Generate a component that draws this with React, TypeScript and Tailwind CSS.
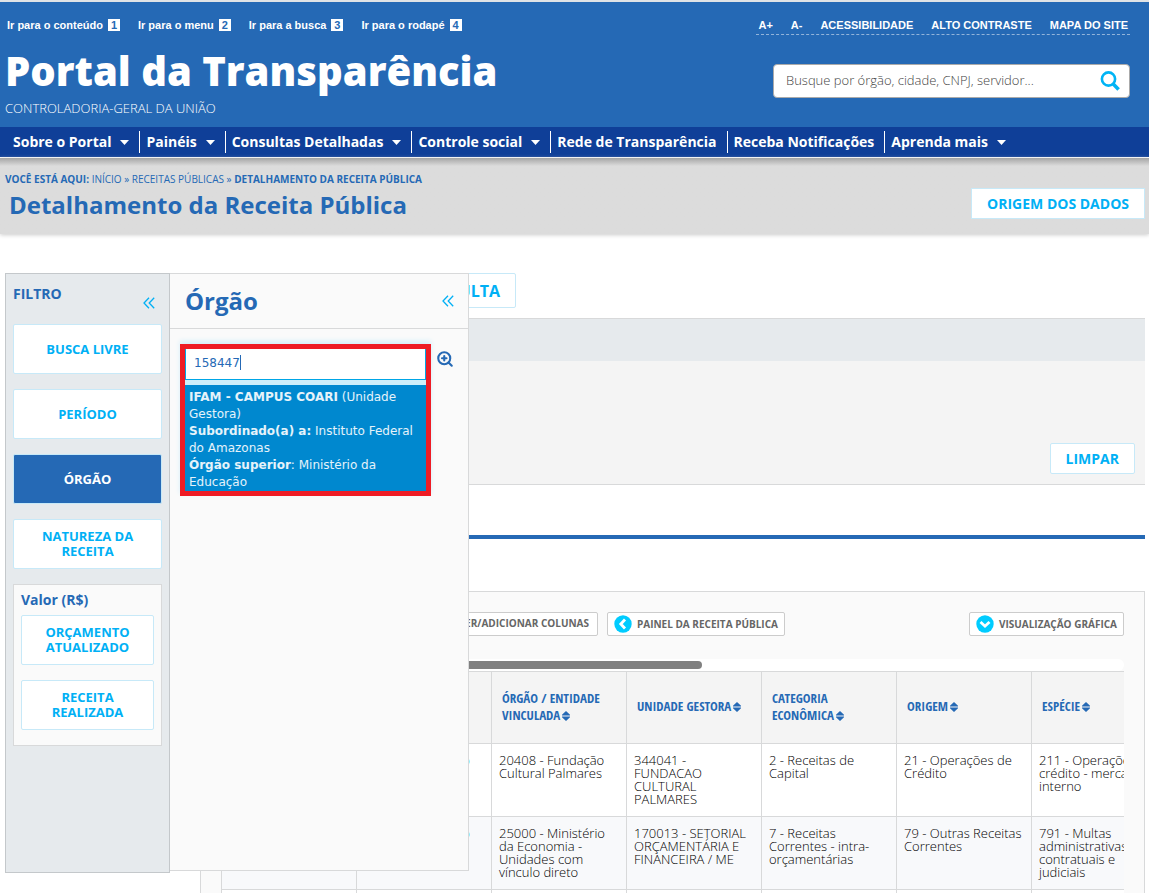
import React from 'react';
import { ZoomIn } from 'lucide-react';

const atalhos = [
  { label: 'Ir para o conteúdo', numero: 1 },
  { label: 'Ir para o menu', numero: 2 },
  { label: 'Ir para a busca', numero: 3 },
  { label: 'Ir para o rodapé', numero: 4 },
];

const acessibilidade = ['A+', 'A-', 'ACESSIBILIDADE', 'ALTO CONTRASTE', 'MAPA DO SITE'];

const menu = [
  { label: 'Sobre o Portal', submenu: true },
  { label: 'Painéis', submenu: true },
  { label: 'Consultas Detalhadas', submenu: true },
  { label: 'Controle social', submenu: true },
  { label: 'Rede de Transparência', submenu: false },
  { label: 'Receba Notificações', submenu: false },
  { label: 'Aprenda mais', submenu: true },
];

const filtros = [
  { label: 'BUSCA LIVRE', ativo: false },
  { label: 'PERÍODO', ativo: false },
  { label: 'ÓRGÃO', ativo: true },
  { label: 'NATUREZA DA RECEITA', ativo: false },
];

const valores = ['ORÇAMENTO ATUALIZADO', 'RECEITA REALIZADA'];

const colunas = [
  'DETALHAR',
  'ÓRGÃO SUPERIOR',
  'ÓRGÃO / ENTIDADE VINCULADA',
  'UNIDADE GESTORA',
  'CATEGORIA ECONÔMICA',
  'ORIGEM',
  'ESPÉCIE',
];

const linhas = [
  [
    '54000 - Ministério do Turismo',
    '20408 - Fundação Cultural Palmares',
    '344041 - FUNDACAO CULTURAL PALMARES',
    '2 - Receitas de Capital',
    '21 - Operações de Crédito',
    '211 - Operações de crédito - mercado interno',
  ],
  [
    '25000 - Ministério da Economia',
    '25000 - Ministério da Economia - Unidades com vínculo direto',
    '170013 - SETORIAL ORÇAMENTÁRIA E FINANCEIRA / ME',
    '7 - Receitas Correntes - intra-orçamentárias',
    '79 - Outras Receitas Correntes',
    '791 - Multas administrativas, contratuais e judiciais',
  ],
];

const Caret = () => (
  <svg className="ml-[9px] h-[5px] w-[9px]" viewBox="0 0 9 5" fill="currentColor" aria-hidden="true">
    <path d="M0 0h9L4.5 5z" />
  </svg>
);

const ChevronDuplo = () => (
  <svg className="h-3 w-3" viewBox="0 0 12 12" fill="none" stroke="currentColor" strokeWidth="1.3" aria-hidden="true">
    <path d="M6 .8 1 6l5 5.2M11.2.8l-5 5.2 5 5.2" />
  </svg>
);

const Ordenar = () => (
  <svg className="ml-0.5 inline-block h-2.5 w-2 align-middle" viewBox="0 0 8 10" fill="currentColor" aria-hidden="true">
    <path d="M4 0 8 3.8v.6H0v-.6zM0 5.6h8v.6L4 10 0 6.2z" />
  </svg>
);

const Circulo = ({ seta }: { seta: string }) => (
  <svg className="h-[18px] w-[18px]" viewBox="0 0 18 18" aria-hidden="true">
    <circle cx="9" cy="9" r="8.7" fill="#00ccff" />
    <path d={seta} fill="none" stroke="#fff" strokeWidth="2.8" />
  </svg>
);

const Cabecalho = () => (
  <header className="border-t-2 border-[#dfe3e6] bg-[#2569b5] text-white">
    <div className="flex justify-between pr-[19px] pl-[5px]">
      <div>
        <ul className="mt-[15px] flex gap-[18px] pl-0.5 font-['Liberation_Sans',sans-serif] text-[11px] leading-4 font-bold">
          {atalhos.map((item) => (
            <li key={item.numero}>
              <a href="#" className="flex items-center gap-[5px]">
                {item.label}
                <span className="h-3 w-3 bg-white text-center leading-3 text-[#2569b5]">{item.numero}</span>
              </a>
            </li>
          ))}
        </ul>
        <h1 className="mt-[9px] text-[40px] leading-[58px] font-extrabold">Portal da Transparência</h1>
        <p className="text-[13px] leading-4 font-light">CONTROLADORIA-GERAL DA UNIÃO</p>
      </div>
      <div className="flex flex-col items-end">
        <ul className="mt-[15px] flex gap-[18px] border-b border-dashed border-[#92b4da] px-0.5 pb-px font-['Liberation_Sans',sans-serif] text-[11px] leading-4 font-bold">
          {acessibilidade.map((item) => (
            <li key={item}>
              <a href="#">{item}</a>
            </li>
          ))}
        </ul>
        <form className="mt-[29px] flex h-[34px] w-[357px] items-center rounded-sm border border-[#aaa] bg-white pr-[9px] pl-3">
          <input
            type="search"
            aria-label="Busca no portal"
            placeholder="Busque por órgão, cidade, CNPJ, servidor..."
            className="min-w-0 flex-1 text-[13px] font-light text-[#444] outline-none placeholder:text-[#444]"
          />
          <button type="button" aria-label="Buscar" className="text-[#00b4f5]">
            <svg className="h-5 w-5" viewBox="0 0 20 20" fill="none" stroke="currentColor">
              <circle cx="8.5" cy="8" r="6.6" strokeWidth="2.6" />
              <path d="m13 12.8 5.6 5.6" strokeWidth="3.6" />
            </svg>
          </button>
        </form>
      </div>
    </div>
    <nav className="mt-[11px] border-b border-white bg-[#0f3f98] pl-[7px]">
      <ul className="flex h-[30px] items-center text-sm font-bold">
        {menu.map((item) => (
          <li key={item.label} className="border-r border-white pr-2.5 pl-1.5 last:border-r-0">
            <a href="#" className="flex h-[22px] items-center">
              {item.label}
              {item.submenu && <Caret />}
            </a>
          </li>
        ))}
      </ul>
    </nav>
  </header>
);

const Titulo = () => (
  <div className="flex h-[76px] justify-between bg-[#dcdcdc] bg-linear-to-b from-[#a5a5a5] to-[#dcdcdc] to-[8px] pr-1 pl-[5px] text-[#2569b5] shadow-[0_1px_4px_#ccc]">
    <div>
      <p className="mt-[13px] text-[10px] leading-4">
        <strong>VOCÊ ESTÁ AQUI:</strong> <a href="#">INÍCIO</a> » <a href="#">RECEITAS PÚBLICAS</a> »{' '}
        <strong>DETALHAMENTO DA RECEITA PÚBLICA</strong>
      </p>
      <h2 className="pl-1 text-2xl leading-9 font-bold">Detalhamento da Receita Pública</h2>
    </div>
    <button type="button" className="mt-[30px] h-[31px] border border-[#c7e9f8] bg-white px-[15px] text-sm font-bold text-[#00b0f5]">
      ORIGEM DOS DADOS
    </button>
  </div>
);

const PainelOrgao = () => (
  <section className="absolute top-[-1px] left-full z-10 ml-px h-[598px] w-[299px] border-r border-b border-[#d8d9da] bg-[#fafafa]">
    <div className="flex h-14 items-center justify-between border-y border-[#d8d9da] pr-3.5 pl-[15px]">
      <h3 className="text-2xl font-bold text-[#2569b5]">Órgão</h3>
      <button type="button" aria-label="Fechar painel" className="text-[#00b0f5]">
        <ChevronDuplo />
      </button>
    </div>
    <div className="flex items-start gap-[5px] pt-[15px] pl-2.5">
      <div className="w-[251px] border-[5px] border-[#ee1c25] bg-[#cdeefa] font-['DejaVu_Sans',sans-serif] shadow-[0_-3px_5px_#d6effa]">
        <div className="relative">
          <input
            type="text"
            aria-label="Órgão"
            defaultValue="158447"
            className="h-[31px] w-full border-x border-b border-[#00a6e6] bg-white px-2 pb-0.5 text-xs text-[#2569b5] outline-none"
          />
          <span className="absolute top-1.5 left-[55px] h-[15px] w-px bg-[#2569b5]" />
        </div>
        <ul className="mt-[5px] bg-[#0088cf] text-xs leading-[17px] text-white/90">
          <li className="px-1 pt-1">
            <strong>IFAM - CAMPUS COARI</strong> (Unidade Gestora)
            <br />
            <strong>Subordinado(a) a:</strong> Instituto Federal do Amazonas
            <br />
            <strong>Órgão superior</strong>: Ministério da Educação
          </li>
        </ul>
      </div>
      <button type="button" aria-label="Pesquisar órgão" className="mt-1.5 text-[#2569b5]">
        <ZoomIn size={18} strokeWidth={2.8} />
      </button>
    </div>
  </section>
);

const Filtro = () => (
  <aside className="relative h-[600px] w-[165px] shrink-0 border border-[#c4c8cb] bg-[#e6eaed] px-[7px] text-[#2569b5]">
    <div className="flex h-[50px] justify-between pr-[7px]">
      <h3 className="mt-2.5 text-sm leading-5 font-bold">FILTRO</h3>
      <button type="button" aria-label="Recolher filtro" className="mt-2 text-[#00b0f5]">
        <ChevronDuplo />
      </button>
    </div>
    <div className="flex flex-col gap-[15px]">
      {filtros.map((item) => (
        <button
          type="button"
          key={item.label}
          className={`h-[50px] rounded-xs border border-[#c7e9f8] px-5 text-[13px] leading-[15px] font-bold ${
            item.ativo ? 'bg-[#2569b5] text-white' : 'bg-white text-[#00b0f5]'
          }`}
        >
          {item.label}
        </button>
      ))}
      <div className="flex flex-col border border-[#d8d9da] bg-[#fafafa] px-[7px] pb-[15px]">
        <h4 className="py-[5px] text-sm leading-5 font-bold">Valor (R$)</h4>
        <div className="flex flex-col gap-[15px]">
          {valores.map((item) => (
            <button
              type="button"
              key={item}
              className="h-[50px] rounded-xs border border-[#c7e9f8] bg-white px-5 text-[13px] leading-[15px] font-bold text-[#00b0f5]"
            >
              {item}
            </button>
          ))}
        </div>
      </div>
    </div>
    <PainelOrgao />
  </aside>
);

const Ferramentas = () => (
  <div className="flex justify-between text-[10px] font-bold text-[#666]">
    <div className="flex gap-[9px]">
      <div className="flex w-[377px] justify-end">
        <button type="button" className="h-6 rounded-xs border border-[#ccc] bg-white px-2 pb-0.5">
          REMOVER/ADICIONAR COLUNAS
        </button>
      </div>
      <button type="button" className="flex h-6 items-center gap-[5px] rounded-xs border border-[#ccc] bg-white px-1.5">
        <Circulo seta="M11 4.5 6.8 9l4.2 4.5" />
        PAINEL DA RECEITA PÚBLICA
      </button>
    </div>
    <button type="button" className="flex h-6 items-center gap-[5px] rounded-xs border border-[#ccc] bg-white px-1.5">
      <Circulo seta="M4.5 7 9 11.2 13.5 7" />
      VISUALIZAÇÃO GRÁFICA
    </button>
  </div>
);

const Tabela = () => (
  <div className="overflow-hidden">
    <div className="mt-[23px] h-3 rounded-md bg-white py-0.5">
      <div className="h-2 w-[481px] rounded-full bg-[#808080]" />
    </div>
    <table className="w-[946px] table-fixed border-collapse text-[13px] leading-[13px] text-black">
      <thead>
        <tr className="h-[72px] bg-[#f4f4f4]">
          {colunas.map((coluna) => (
            <th
              key={coluna}
              className="w-[135px] border border-[#d8d9da] px-2.5 pb-0.5 text-left font-['Open_Sans_Condensed','Liberation_Sans_Narrow','Open_Sans',sans-serif] text-[13px] leading-[17px] font-bold text-[#2569b5]"
            >
              {coluna}
              <Ordenar />
            </th>
          ))}
        </tr>
      </thead>
      <tbody>
        {linhas.map((linha) => (
          <tr key={linha[0]} className="h-[73px] align-top font-light odd:bg-white even:bg-[#f8f9fb]">
            <td className="border border-[#d8d9da]" />
            {linha.map((celula, index) => (
              <td key={index} className="border border-[#d8d9da] px-[7px] pt-2.5">
                {index === 0 ? <a href="#" className="text-[#00b0f5]">{celula}</a> : celula}
              </td>
            ))}
          </tr>
        ))}
        <tr className="h-[73px] bg-white">
          {colunas.map((coluna) => (
            <td key={coluna} className="border border-[#d8d9da]" />
          ))}
        </tr>
      </tbody>
    </table>
  </div>
);

const App = () => {
  return (
    <div className="bg-white font-['Open_Sans',sans-serif]">
      <Cabecalho />
      <Titulo />
      <main className="flex items-start gap-[30px] pt-[39px] pr-1 pl-[5px]">
        <Filtro />
        <div className="min-w-0 flex-1">
          <div className="flex w-[316px] justify-end">
            <button type="button" className="h-[35px] rounded-xs border border-[#c7e9f8] bg-white px-[15px] text-base font-bold text-[#00b0f5]">
              CONSULTA
            </button>
          </div>
          <div className="mt-2.5 border-y border-[#d8d9da] bg-[#f4f4f4]">
            <div className="h-[42px] bg-[#e6eaed]" />
            <div className="flex justify-end pt-[82px] pr-2.5 pb-2.5">
              <button type="button" className="h-[31px] rounded-xs border border-[#c7e9f8] bg-white px-[15px] text-sm font-bold text-[#00b0f5]">
                LIMPAR
              </button>
            </div>
          </div>
          <hr className="mt-[50px] border-t-4 border-[#2569b5]" />
          <div className="mt-[52px] border border-[#d8d9da] bg-[#fafafa] px-5 pt-5">
            <Ferramentas />
            <Tabela />
          </div>
        </div>
      </main>
    </div>
  );
};

export default App;
